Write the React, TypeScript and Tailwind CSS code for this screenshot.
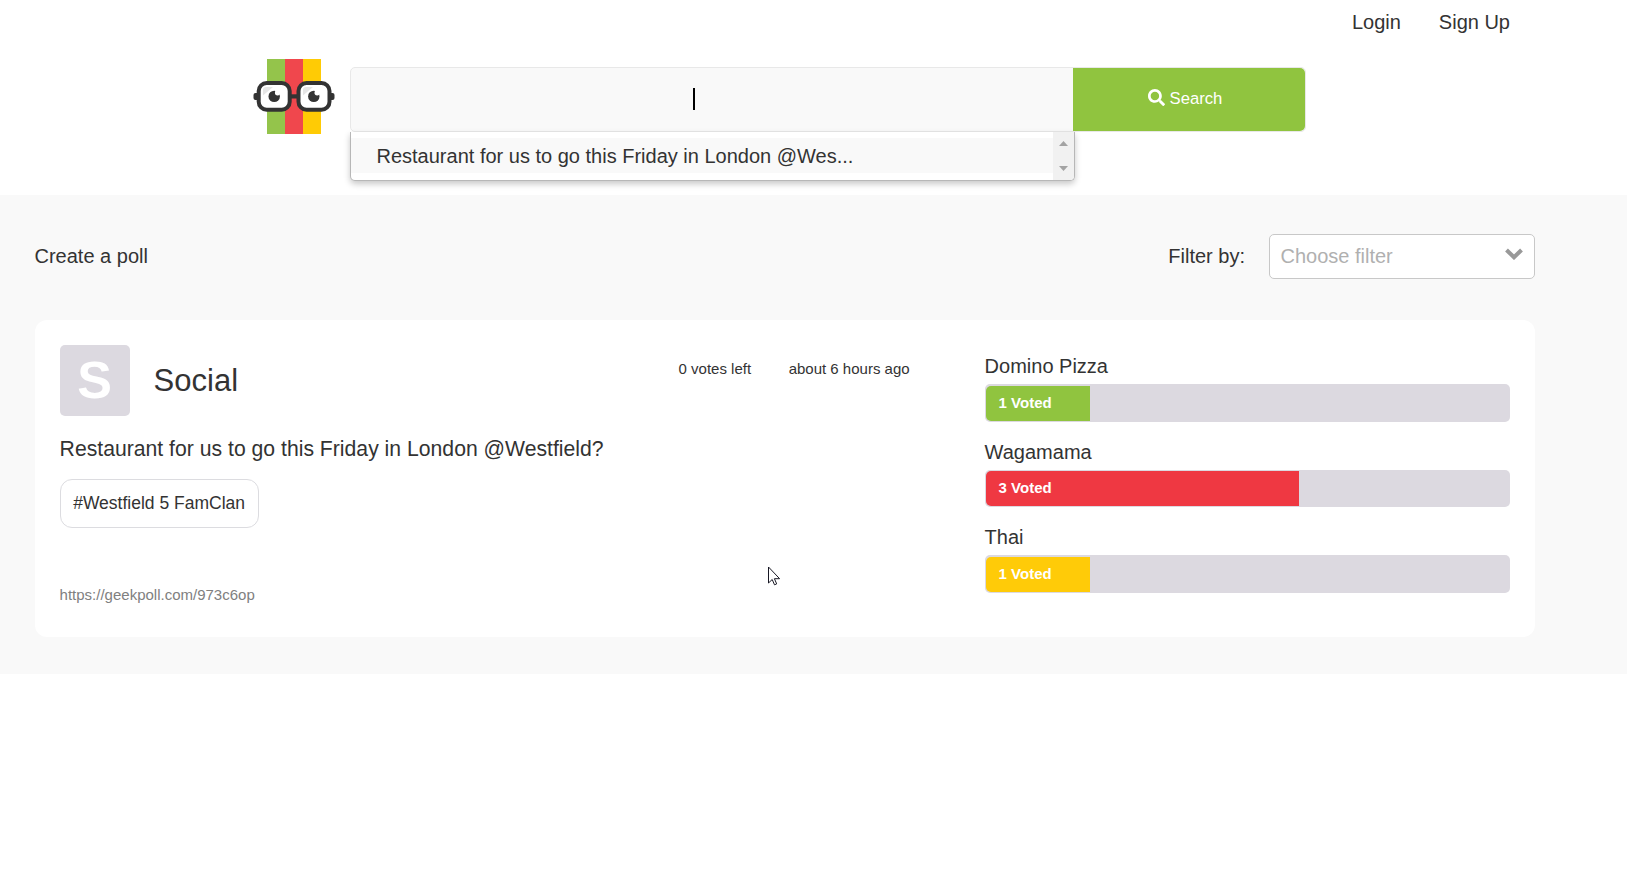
import { FaSearch } from "react-icons/fa";

const options = [
  { name: "Domino Pizza", votes: 1, color: "bg-[#90c43f]", row: "h-[86px]", bar: "h-[38px] pt-[2px]" },
  { name: "Wagamama", votes: 3, color: "bg-[#ef3842]", row: "h-[85px]", bar: "h-[37px] pt-px" },
  { name: "Thai", votes: 1, color: "bg-[#ffcb08]", row: "h-[85px]", bar: "h-[38px] pt-[2px]" },
];
const totalVotes = options.reduce((sum, o) => sum + o.votes, 0);

function Logo() {
  return (
    <svg width="84" height="76" viewBox="252 59 84 76" className="block shrink-0">
      <rect x="267" y="59" width="18" height="75" fill="#94c44b" />
      <rect x="285" y="59" width="18" height="75" fill="#f0474d" />
      <rect x="303" y="59" width="18" height="75" fill="#ffcb05" />
      <rect x="253.500" y="93" width="6" height="7" rx="2" fill="#333" />
      <rect x="328.500" y="93" width="6" height="7" rx="2" fill="#333" />
      <rect x="289" y="94.300" width="10" height="4.200" fill="#333" />
      <rect x="258.700" y="83" width="31" height="26.800" rx="8" fill="#fff" stroke="#333" strokeWidth="4" />
      <rect x="298.500" y="83" width="31" height="26.800" rx="8" fill="#fff" stroke="#333" strokeWidth="4" />
      <path d="M263 95.500v-5.500a3 3 0 0 1 3-3h7z" fill="#e6e6e6" />
      <path d="M303 95.500v-5.500a3 3 0 0 1 3-3h7z" fill="#e6e6e6" />
      <circle cx="274.200" cy="96.400" r="5.700" fill="#333" />
      <circle cx="313.800" cy="96.400" r="5.700" fill="#333" />
      <circle cx="277.600" cy="92.800" r="2.700" fill="#fff" />
      <circle cx="317.200" cy="92.800" r="2.700" fill="#fff" />
    </svg>
  );
}

function SearchBar() {
  return (
    <div className="relative ml-[14px] mt-2 flex h-[65px] w-[956px] rounded-[5px] border border-[#e8e8e8] bg-[#f9f9f9]">
      <div className="flex w-[722px] items-center justify-center">
        <span className="-ml-9 mb-px h-[22px] w-[2px] bg-black" />
      </div>
      <button className="flex flex-1 items-center justify-center rounded-r-[5px] bg-[#90c43f] pb-[2px] pr-2 text-[16.670px] text-white">
        <FaSearch className="mb-[2px] mr-[5px] size-[17px]" />
        <span className="leading-5">Search</span>
      </button>
      <div className="absolute left-[-1px] top-[64px] flex h-[49px] w-[725px] rounded-b-[5px] border border-t-0 border-[#b7b7b7] bg-white shadow-[0_3px_6px_rgba(0,0,0,0.22)]">
        <div className="mb-[7px] mt-[6px] h-[35px] flex-1 bg-[#f9f9f9] pl-[25.500px] text-xl leading-[37px]">
          Restaurant for us to go this Friday in London @Wes...
        </div>
        <div className="flex w-[21px] flex-col items-center justify-between rounded-br bg-[#f1f1f1] py-[9px]">
          <svg width="9" height="5" viewBox="0 0 9 5"><path d="M0 5 4.500 0 9 5z" fill="#a3a3a3" /></svg>
          <svg width="9" height="5" viewBox="0 0 9 5"><path d="M0 0 4.500 5 9 0z" fill="#a3a3a3" /></svg>
        </div>
      </div>
    </div>
  );
}

function PollCard() {
  return (
    <article className="relative flex h-[317px] w-[1500px] rounded-xl bg-white px-[24.600px]">
      <div className="w-[925px] pt-[25px]">
        <div className="flex">
          <div className="flex h-[71px] w-[70px] items-center justify-center rounded-[5px] bg-[#dcd9e0] text-[52px] font-bold leading-[67px] text-white">
            <span>S</span>
          </div>
          <h2 className="ml-6 w-[525px] text-[31px] leading-[72px]">Social</h2>
          <div className="flex gap-[37.500px] text-[15px] leading-[48px]">
            <span>0 votes left</span>
            <span>about 6 hours ago</span>
          </div>
        </div>
        <p className="mt-[17px] text-[21.200px] leading-[30px]">Restaurant for us to go this Friday in London @Westfield?</p>
        <span className="mt-[15px] flex h-[49px] w-[199px] items-center justify-center rounded-xl border border-[#dcdce0] text-[17.500px]">
          #Westfield 5 FamClan
        </span>
        <p className="mt-[57px] text-[15px] leading-5 text-[#808080]">https://geekpoll.com/973c6op</p>
      </div>
      <div className="w-[525px] pt-[34px]">
        {options.map((o) => (
          <div key={o.name} className={o.row}>
            <div className="h-[30px] text-xl leading-6">{o.name}</div>
            <div className={`rounded-[5px] bg-[#dcd9e0] px-px ${o.bar}`}>
              <div
                className={`h-[35px] rounded-l-[5px] pl-[13px] text-[15px] font-bold leading-[34px] text-white ${o.color}`}
                style={{ width: `${(o.votes / totalVotes) * 100}%` }}
              >
                {o.votes} Voted
              </div>
            </div>
          </div>
        ))}
      </div>
      <svg className="absolute left-[733px] top-[246px]" width="13" height="21" viewBox="0 0 13 21">
        <path d="M.5 1v16l3.700-3.500 2.300 5.300 2.200-.9-2.300-5.200h5.200z" fill="#fff" stroke="#181824" />
      </svg>
    </article>
  );
}

export default function App() {
  return (
    <div className="min-h-screen bg-white font-['Liberation_Sans',Arial,sans-serif] text-[#333]">
      <header className="h-[195px]">
        <nav className="flex h-[59px] justify-end gap-[38px] pr-[117px] text-xl leading-[44px]">
          <a>Login</a>
          <a>Sign Up</a>
        </nav>
        <div className="flex pl-[252px]">
          <Logo />
          <SearchBar />
        </div>
      </header>
      <main className="h-[479px] bg-[#f9f9f9] px-[35px] pt-[39px]">
        <div className="mb-[41px] flex h-[45px] w-[1500px] items-center text-xl">
          <span className="-ml-[0.500px] flex-1 pb-[2px]">Create a poll</span>
          <span className="mr-6 pb-[2px]">Filter by:</span>
          <div className="flex h-[45px] w-[266px] items-center justify-between rounded-[5px] border border-[#c8c8c8] bg-white pb-[2px] pl-[10.500px] pr-[11px] text-[#b0b0b0]">
            <span>Choose filter</span>
            <svg width="18" height="12" viewBox="0 0 18 12" className="mb-[3px]">
              <path d="m1.500 2 7.500 7.300L16.500 2" fill="none" stroke="#999" strokeWidth="4" />
            </svg>
          </div>
        </div>
        <PollCard />
      </main>
    </div>
  );
}
